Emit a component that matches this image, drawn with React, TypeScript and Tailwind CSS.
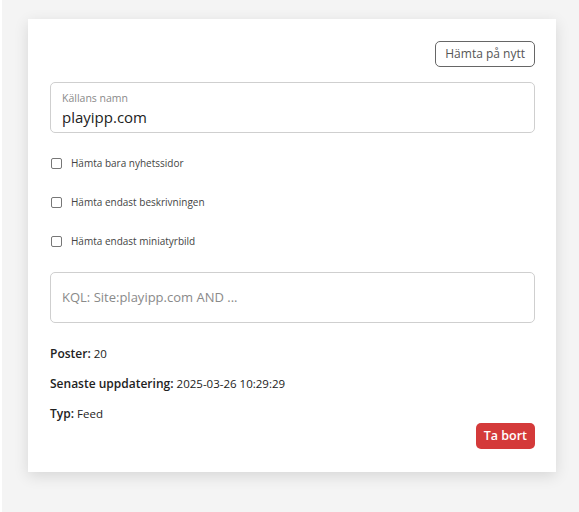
import { useState } from 'react';

const OPTIONS = [
  'Hämta bara nyhetssidor',
  'Hämta endast beskrivningen',
  'Hämta endast miniatyrbild',
];

export default function App() {
  const [name, setName] = useState('playipp.com');
  const [checked, setChecked] = useState<boolean[]>([false, false, false]);

  return (
    <div className="min-h-[512px] bg-white pl-[2px] font-['Open_Sans',sans-serif]">
      <div className="min-h-[512px] bg-[#f4f4f4] pl-[26px] pr-[21px] pt-[19px] pb-[41px]">
        <div className="flex w-[528px] flex-col bg-white pl-[22px] pr-[21px] pt-[22px] pb-[23px] shadow-[0_4px_14px_rgba(0,0,0,0.12)]">
          <div className="flex justify-end">
            <button
              type="button"
              className="h-[26px] rounded-[5px] border border-[#666] px-[9px] text-[12px] text-[#555]"
            >
              Hämta på nytt
            </button>
          </div>

          <label className="mt-[15px] flex h-[51px] flex-col rounded-[5px] border border-[#cfcfcf] px-[11px] pt-[8px]">
            <span className="text-[10.5px] leading-[14px] text-[#8a8a8a]">Källans namn</span>
            <input
              value={name}
              onChange={(e) => setName(e.target.value)}
              className="mt-[2px] text-[15px] leading-[20px] text-[#222] outline-none"
            />
          </label>

          <div className="mt-[23px] flex flex-col gap-[25px]">
            {OPTIONS.map((label, i) => (
              <label key={label} className="flex h-[14px] items-center text-[10px] text-[#444]">
                <input
                  type="checkbox"
                  checked={checked[i]}
                  onChange={() =>
                    setChecked((c) => c.map((v, j) => (j === i ? !v : v)))
                  }
                  className="ml-[1px] h-[11px] w-[11px] appearance-none rounded-[2px] border border-[#777] bg-white"
                />
                <span className="ml-[9px]">{label}</span>
              </label>
            ))}
          </div>

          <textarea
            placeholder="KQL: Site:playipp.com AND ..."
            className="mt-[24px] h-[51px] resize-none rounded-[5px] border border-[#cfcfcf] px-[11px] pt-[14px] text-[13px] leading-[20px] text-[#222] outline-none placeholder:text-[#8a8a8a]"
          />

          <div className="mt-[21px] flex flex-col gap-[11px] text-[12px] leading-[19px] text-[#222]">
            <div>
              <span className="font-semibold">Poster:</span> <span className="text-[11.5px]">20</span>
            </div>
            <div>
              <span className="font-semibold">Senaste uppdatering:</span>{' '}
              <span className="text-[11.5px]">2025-03-26 10:29:29</span>
            </div>
            <div>
              <span className="font-semibold">Typ:</span> <span className="text-[11.5px]">Feed</span>
            </div>
          </div>

          <div className="flex justify-end">
            <button
              type="button"
              className="h-[26px] rounded-[5px] bg-[#d43a3a] px-[8px] text-[12.5px] font-semibold text-white"
            >
              Ta bort
            </button>
          </div>
        </div>
      </div>
    </div>
  );
}
